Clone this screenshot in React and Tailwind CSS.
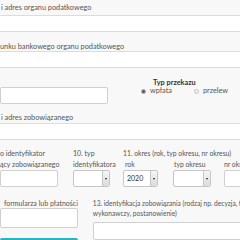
import React from 'react';

const Strip = () => <div className="h-[17px] w-full border-y border-[#dcdcdc] bg-white" />;

const Box = ({ className = '' }) => (
    <div className={`rounded-[2px] border border-[#d0d0d0] bg-white ${className}`} />
);

const Select = ({ value, className = '' }) => (
    <div className={`flex h-[17px] items-stretch rounded-[2px] border border-[#c6c6c6] bg-white ${className}`}>
        <span className="flex flex-1 items-center pl-[3px] text-[7px] text-[#333]">{value}</span>
        <span className="flex w-[7px] items-center justify-center rounded-r-[2px] border-l border-[#c6c6c6] bg-gradient-to-b from-[#f6f6f6] to-[#dcdcdc]">
            <span className="h-0 w-0 border-x-[1.5px] border-t-[2px] border-x-transparent border-t-[#222]" />
        </span>
    </div>
);

const Radio = ({ checked, label }) => (
    <div className="flex items-center gap-[4px]">
        <span className={`flex h-[5px] w-[5px] items-center justify-center rounded-full border ${checked ? 'border-[#9a9a9a] bg-[#e8e8e8]' : 'border-[#c4c4c4] bg-[#f2f2f2]'}`}>
            {checked && <span className="h-[3px] w-[3px] rounded-full bg-[#555]" />}
        </span>
        <span>{label}</span>
    </div>
);

export default function App() {
    return (
        <div className="h-[240px] w-[240px] overflow-hidden whitespace-nowrap bg-[#f8f8f8] font-['Lato','Liberation_Sans',sans-serif] text-[7.3px] leading-[8px] text-[#555]">
            {/* nazwa organu */}
            <div className="h-[15px] pt-[4px] pl-[1px]">i adres organu podatkowego</div>
            <Strip />

            {/* rachunek */}
            <div className="h-[19px] pt-[11px]">unku bankowego organu podatkowego</div>
            <Strip />

            {/* kwota + typ przekazu */}
            <div className="pt-[11px]">
                <div className="flex">
                    <div className="w-[108px] pt-[8px]">
                        <Box className="h-[17px] w-full" />
                    </div>
                    <div className="ml-[33px]">
                        <div className="pl-[12px] font-bold text-[#333]">Typ przekazu</div>
                        <div className="flex gap-[22px]">
                            <Radio checked label="wpłata" />
                            <Radio label="przelew" />
                        </div>
                    </div>
                </div>
                <div className="mt-[10px] h-[9px] pl-[1px]">i adres zobowiązanego</div>
            </div>
            <Strip />

            {/* identyfikator + okres */}
            <div className="flex pt-[8px] text-[7px] leading-[11px]">
                <div className="w-[58px]">
                    <div>o identyfikator</div>
                    <div>ący zobowiązanego</div>
                    <Box className="h-[17px] w-full" />
                </div>
                <div className="ml-[15px] w-[37px]">
                    <div>10. typ</div>
                    <div>identyfikatora</div>
                    <Select className="w-full" />
                </div>
                <div className="ml-[13px] flex-1 text-[6.8px]">
                    <div>11. okres (rok, typ okresu, nr okresu)</div>
                    <div className="flex">
                        <div className="w-[35px]">
                            <div className="pl-[2px]">rok</div>
                            <Select value="2020" className="w-full" />
                        </div>
                        <div className="ml-[15px] w-[38px]">
                            <div className="pl-[1px]">typ okresu</div>
                            <Select className="w-full" />
                        </div>
                        <div className="ml-[13px] -mr-[4px] flex-1">
                            <div>nr okresu</div>
                            <Box className="h-[17px] w-full" />
                        </div>
                    </div>
                </div>
            </div>

            {/* symbol + identyfikacja */}
            <div className="mt-[11px] flex leading-[10px]">
                <div className="w-[83px] text-[7px]">
                    <div className="pl-[4px]">formularza lub płatności</div>
                    <Box className="h-[20px] w-full" />
                    <div className="mt-[10px] h-[12px] w-full rounded-[2px] bg-[#26b4c6]" />
                </div>
                <div className="ml-[15px] -mr-[4px] flex-1 text-[6.6px]">
                    <div>13. identyfikacja zobowiązania (rodzaj np. decyzja, tytuł</div>
                    <div>wykonawczy, postanowienie)</div>
                    <Box className="mt-[4px] h-[18px] w-full" />
                </div>
            </div>
        </div>
    );
}
